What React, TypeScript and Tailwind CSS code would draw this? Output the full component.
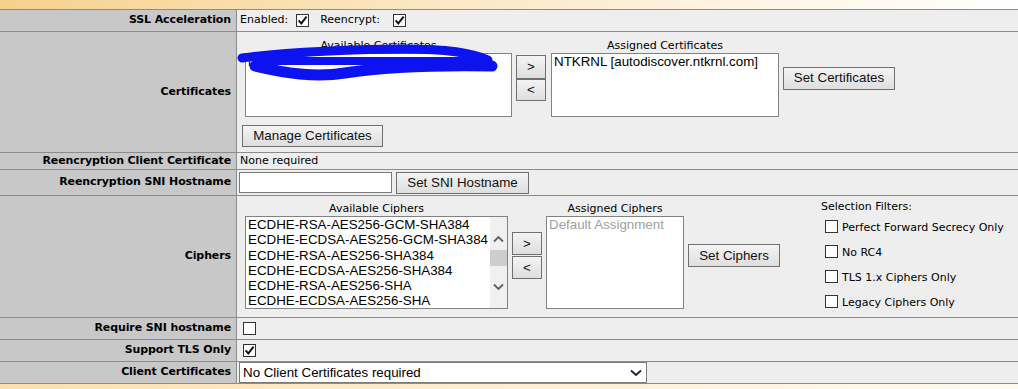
import React from 'react';

const ui = "font-['DejaVu_Sans',Verdana,sans-serif] text-[11px] text-black";
const arial = "font-['Liberation_Sans',Arial,sans-serif] text-[13.33px] text-black";
const btn =
  "flex shrink-0 items-center justify-center border border-[#707070] bg-linear-to-b from-[#f4f4f4] to-[#dedede] font-['Liberation_Sans',Arial,sans-serif] text-[13.33px] text-[#111] leading-none";

const ciphers = [
  'ECDHE-RSA-AES256-GCM-SHA384',
  'ECDHE-ECDSA-AES256-GCM-SHA384',
  'ECDHE-RSA-AES256-SHA384',
  'ECDHE-ECDSA-AES256-SHA384',
  'ECDHE-RSA-AES256-SHA',
  'ECDHE-ECDSA-AES256-SHA',
];

const filters = ['Perfect Forward Secrecy Only', 'No RC4', 'TLS 1.x Ciphers Only', 'Legacy Ciphers Only'];

function Check({ checked }: { checked?: boolean }) {
  return (
    <span className="flex h-[13px] w-[13px] shrink-0 items-center justify-center border border-[#333] bg-white">
      {checked && (
        <svg width="11" height="11" viewBox="0 0 11 11">
          <path d="M1.6 5.4 L4.3 8.4 L9.6 1.6" fill="none" stroke="#111" strokeWidth="1.9" />
        </svg>
      )}
    </span>
  );
}

function Row({ label, h, children }: { label: string; h: string; children: React.ReactNode }) {
  return (
    <div className={`flex border-b border-[#8c8c8c] ${h}`}>
      <div className={`flex w-[237px] shrink-0 items-center justify-end border-r border-[#8c8c8c] bg-[#c8c8c8] pr-[5px] font-bold tracking-[-0.1px] ${ui}`}>
        {label}
      </div>
      <div className="flex min-w-0 flex-1 bg-[#eeeeee]">{children}</div>
    </div>
  );
}

export default function App() {
  return (
    <div className="w-[1018px] overflow-hidden bg-white">
      {/* page background strip */}
      <div className="h-[9px] bg-linear-to-r from-[#f6d18c] via-[#fbe9c6] via-45% to-white" />

      <div className="border-t border-[#8c8c8c]">
        <Row label="SSL Acceleration" h="h-[22px]">
          <div className={`flex items-center pl-[3px] ${ui}`}>
            <span>Enabled:</span>
            <span className="ml-[8px]"><Check checked /></span>
            <span className="ml-[11px]">Reencrypt:</span>
            <span className="ml-[13px]"><Check checked /></span>
          </div>
        </Row>

        <Row label="Certificates" h="h-[121px]">
          <div className="flex flex-col pt-[7px]">
            <div className="flex items-center">
              <div className="relative ml-[8px] w-[267px]">
                <div className={`h-[14px] text-center leading-[14px] ${ui}`}>Available Certificates</div>
                <div className={`h-[64px] border border-[#828282] bg-white pl-[2px] ${arial}`}>
                  <div className="leading-[15.3px]">l</div>
                </div>
                {/* redaction scribble */}
                <svg className="pointer-events-none absolute left-0 top-0 overflow-visible" width="267" height="78">
                  <g fill="none" stroke="#0d12f0" strokeLinecap="round" strokeLinejoin="round">
                    <path d="M -3 19 C 40 13, 120 10, 160 10 C 200 10, 226 13, 243 21" strokeWidth="9" />
                    <path d="M 10 27 C 40 34, 70 39, 100 34 C 140 28, 190 26, 247 27" strokeWidth="11" />
                    <path d="M 14 22 L 240 22" strokeWidth="8" />
                  </g>
                </svg>
              </div>
              <div className="ml-[4px] flex w-[30px] shrink-0 flex-col">
                <button className={`${btn} h-[24px] w-[30px]`}>&gt;</button>
                <button className={`${btn} h-[22px] w-[30px]`}>&lt;</button>
              </div>
              <div className="ml-[5px] w-[228px]">
                <div className={`h-[14px] text-center leading-[14px] ${ui}`}>Assigned Certificates</div>
                <div className={`h-[64px] border border-[#828282] bg-white pl-[2px] ${arial}`}>
                  <div className="leading-[15.3px]">NTKRNL [autodiscover.ntkrnl.com]</div>
                </div>
              </div>
              <button className={`${btn} ml-[4px] h-[23px] w-[112px]`}>Set Certificates</button>
            </div>
            <button className={`${btn} ml-[5px] mt-[8px] h-[22px] w-[141px]`}>Manage Certificates</button>
          </div>
        </Row>

        <Row label="Reencryption Client Certificate" h="h-[17px]">
          <div className={`flex items-center pl-[3px] ${ui}`}>None required</div>
        </Row>

        <Row label="Reencryption SNI Hostname" h="h-[26px]">
          <div className="flex items-center pl-[2px]">
            <div className="h-[21px] w-[153px] border border-[#7a7a7a] bg-white" />
            <button className={`${btn} ml-[4px] h-[22px] w-[133px]`}>Set SNI Hostname</button>
          </div>
        </Row>

        <Row label="Ciphers" h="h-[122px]">
          <div className="flex items-start pt-[6px]">
            <div className="flex items-center">
              <div className="ml-[8px] w-[263px]">
                <div className={`h-[14px] text-center leading-[14px] ${ui}`}>Available Ciphers</div>
                <div className="flex h-[93px] overflow-hidden border border-[#828282] bg-white">
                  <div className={`flex-1 overflow-hidden whitespace-nowrap pl-[2px] ${arial}`}>
                    {ciphers.map((c) => (
                      <div key={c} className="leading-[15.3px]">{c}</div>
                    ))}
                  </div>
                  <div className="flex w-[17px] shrink-0 flex-col items-center bg-[#f0f0f0]">
                    <svg className="mt-[18px]" width="11" height="8" viewBox="0 0 11 8">
                      <path d="M1 6.5 L5.5 2 L10 6.5" fill="none" stroke="#606060" strokeWidth="1.8" />
                    </svg>
                    <div className="mt-[7px] h-[16px] w-full bg-[#cdcdcd]" />
                    <svg className="mt-[17px]" width="11" height="8" viewBox="0 0 11 8">
                      <path d="M1 1.5 L5.5 6 L10 1.5" fill="none" stroke="#606060" strokeWidth="1.8" />
                    </svg>
                  </div>
                </div>
              </div>
              <div className="ml-[4px] flex w-[30px] flex-col">
                <button className={`${btn} h-[23px] w-[30px]`}>&gt;</button>
                <button className={`${btn} mt-[1px] h-[23px] w-[30px]`}>&lt;</button>
              </div>
              <div className="ml-[4px] w-[138px]">
                <div className={`h-[14px] text-center leading-[14px] ${ui}`}>Assigned Ciphers</div>
                <div className={`h-[93px] border border-[#828282] bg-white pl-[2px] ${arial}`}>
                  <div className="leading-[15.3px] text-[#a0a0a0]">Default Assignment</div>
                </div>
              </div>
              <button className={`${btn} ml-[4px] h-[23px] w-[92px]`}>Set Ciphers</button>
            </div>

            <div className={`-mt-[2px] ml-[41px] flex flex-col ${ui}`}>
              <div className="h-[14px] leading-[14px]">Selection Filters:</div>
              {filters.map((f) => (
                <div key={f} className="flex h-[25px] items-center pl-[4px]">
                  <Check />
                  <span className="ml-[4px] pt-[4px]">{f}</span>
                </div>
              ))}
            </div>
          </div>
        </Row>

        <Row label="Require SNI hostname" h="h-[22px]">
          <div className="flex items-center pl-[6px]">
            <Check />
          </div>
        </Row>

        <Row label="Support TLS Only" h="h-[22px]">
          <div className="flex items-center pl-[6px]">
            <Check checked />
          </div>
        </Row>

        <Row label="Client Certificates" h="h-[22px]">
          <div className="flex items-start pl-[2px]">
            <div className={`flex h-[21px] w-[408px] items-center justify-between border border-[#7a7a7a] bg-white pl-[3px] pr-[4px] ${arial}`}>
              <span>No Client Certificates required</span>
              <svg width="12" height="8" viewBox="0 0 12 8">
                <path d="M1 1.5 L6 6 L11 1.5" fill="none" stroke="#222" strokeWidth="1.8" />
              </svg>
            </div>
          </div>
        </Row>
      </div>

      <div className="h-[10px] bg-linear-to-r from-[#fbe0ad] via-[#fdefd3] via-50% to-[#fffaf0]" />
    </div>
  );
}
